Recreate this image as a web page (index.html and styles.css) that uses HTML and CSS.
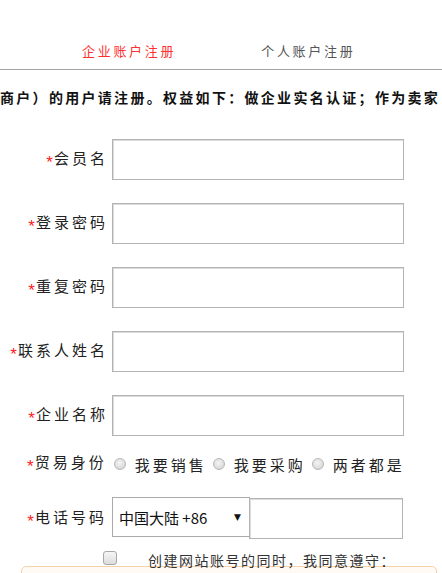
FILE: index.html
```html
<!DOCTYPE html>
<html lang="zh-CN">
<head>
<meta charset="utf-8">
<title>企业账户注册</title>
<link rel="stylesheet" href="styles.css">
</head>
<body>
<div class="tabs">
  <span class="tab tab-active">企业账户注册</span>
  <span class="tab">个人账户注册</span>
</div>
<div class="notice"><span>商户）的用户请注册。权益如下：做企业实名认证；作为卖家</span></div>
<form class="form">
  <div class="row">
    <label class="label"><span class="req">*</span>会员名</label>
    <input class="field" type="text">
  </div>
  <div class="row">
    <label class="label"><span class="req">*</span>登录密码</label>
    <input class="field" type="password">
  </div>
  <div class="row">
    <label class="label"><span class="req">*</span>重复密码</label>
    <input class="field" type="password">
  </div>
  <div class="row">
    <label class="label"><span class="req">*</span>联系人姓名</label>
    <input class="field" type="text">
  </div>
  <div class="row">
    <label class="label"><span class="req">*</span>企业名称</label>
    <input class="field" type="text">
  </div>
  <div class="radio-row">
    <span class="radio-label"><span class="req">*</span>贸易身份</span>
    <span class="radio"></span><span class="opt">我要销售</span>
    <span class="radio"></span><span class="opt">我要采购</span>
    <span class="radio"></span><span class="opt">两者都是</span>
  </div>
  <div class="phone-row">
    <label class="label"><span class="req">*</span>电话号码</label>
    <div class="select"><span class="select-text">中国大陆 +86</span><span class="arrow">▼</span></div>
    <input class="phone" type="text">
  </div>
  <div class="agree-row">
    <span class="checkbox"></span>
    <span class="agree-text">创建网站账号的同时，我同意遵守：</span>
  </div>
  <div class="terms"></div>
</form>
</body>
</html>
```
FILE: styles.css
```css
html, body {
  margin: 0;
  padding: 0;
  background: #fff;
}
body {
  width: 442px;
  overflow: hidden;
  font-family: "Noto Sans CJK SC", "Noto Sans", sans-serif;
  color: #222;
}
.tabs {
  height: 70px;
  box-sizing: border-box;
  padding-top: 41px;
  border-bottom: 1px solid #a3a3a3;
  display: flex;
}
.tab {
  font-size: 13px;
  line-height: 20px;
  letter-spacing: 2.7px;
  color: #555;
  margin-left: 85px;
}
.tab-active {
  color: #ff3030;
  margin-left: 82px;
}
.notice {
  margin-top: 15px;
  height: 24px;
  line-height: 24px;
  white-space: nowrap;
  font-size: 14px;
  font-weight: bold;
  letter-spacing: 2.3px;
  color: #111;
}
.form {
  margin: 30px 0 0 0;
  display: flex;
  flex-direction: column;
}
.row {
  display: flex;
  align-items: center;
  height: 41px;
  margin-bottom: 23px;
}
.label {
  width: 112px;
  box-sizing: border-box;
  padding-right: 4px;
  text-align: right;
  font-size: 15px;
  letter-spacing: 3px;
  white-space: nowrap;
  color: #222;
}
.req {
  color: #ff2020;
  font-family: "Liberation Sans", sans-serif;
  font-size: 17px;
  letter-spacing: 0;
  margin-right: 1px;
  vertical-align: -4px;
}
.field {
  width: 292px;
  height: 41px;
  box-sizing: border-box;
  margin: 0;
  border: 1px solid #b3b3b3;
  box-shadow: inset 1px 1px 0 #dcdcdc;
  background: #fff;
  padding: 0 6px;
}
.radio-row {
  display: flex;
  align-items: center;
  height: 20px;
  margin-top: -5px;
  padding-left: 27px;
  font-size: 15px;
  letter-spacing: 3px;
  white-space: nowrap;
}
.radio-label {
  margin-right: 7px;
}
.radio {
  width: 10px;
  height: 10px;
  border: 1px solid #b8b8b8;
  border-radius: 50%;
  background: radial-gradient(circle at 45% 40%, #f4f4f4 0%, #dedede 60%, #c8c8c8 100%);
  flex: none;
}
.opt {
  margin-left: 9px;
  margin-right: 6px;
  color: #222;
}
.phone-row {
  display: flex;
  align-items: flex-start;
  margin-top: 23px;
  height: 42px;
}
.phone-row .label {
  height: 40px;
  line-height: 40px;
  padding-right: 5px;
}
.select {
  width: 138px;
  height: 40px;
  box-sizing: border-box;
  border: 1px solid #aaa;
  display: flex;
  align-items: center;
  justify-content: space-between;
  padding: 0 8px 0 6px;
  background: #fff;
}
.select-text {
  font-size: 15px;
  color: #111;
  letter-spacing: 0;
}
.arrow {
  font-size: 9px;
  color: #111;
  font-family: "DejaVu Sans", sans-serif;
}
.phone {
  width: 154px;
  height: 41px;
  box-sizing: border-box;
  margin: 1px 0 0 -1px;
  border: 1px solid #b3b3b3;
  box-shadow: inset 1px 1px 0 #dcdcdc;
  padding: 0 6px;
}
.agree-row {
  display: flex;
  align-items: center;
  height: 16px;
  margin-top: 11px;
  padding-left: 103px;
}
.checkbox {
  width: 12px;
  height: 12px;
  border: 1px solid #a8a8a8;
  border-radius: 3px;
  background: linear-gradient(#f6f6f6, #dcdcdc);
  flex: none;
}
.agree-text {
  margin-left: 31px;
  font-size: 14px;
  letter-spacing: 1.5px;
  color: #333;
  white-space: nowrap;
  position: relative;
  top: 2px;
}
.terms {
  margin: 0 5px 0 21px;
  height: 60px;
  border: 1px solid #f5d2aa;
  border-radius: 5px;
  background: #fffaf3;
}
```
